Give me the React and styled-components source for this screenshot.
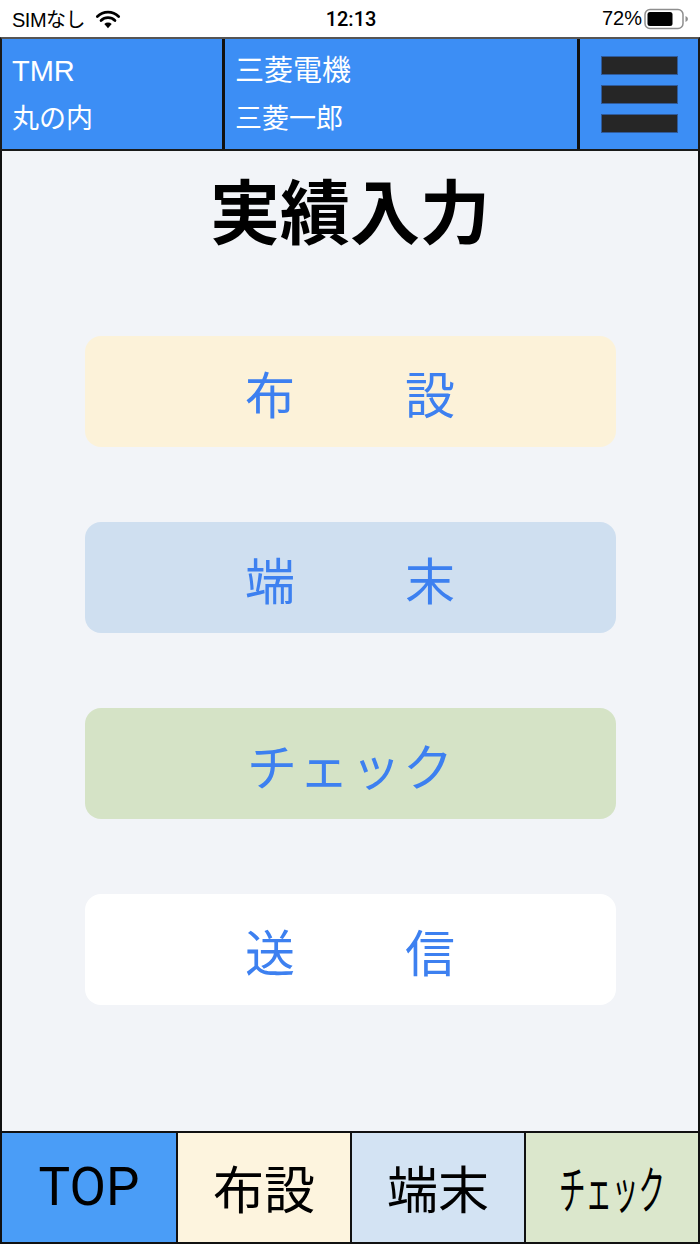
import styled, { createGlobalStyle } from 'styled-components'

const GlobalStyle = createGlobalStyle`
  html, body {
    margin: 0;
    padding: 0;
    background: #ffffff;
  }
  body {
    font-family: "Noto Sans CJK JP", "Noto Sans", sans-serif;
  }
  * {
    box-sizing: border-box;
  }
`

const ACTIONS = [
  { chars: ['布', '設'], gap: 110, bg: '#fcf2d9' },
  { chars: ['端', '末'], gap: 110, bg: '#cfdff0' },
  { chars: ['チ', 'ェ', 'ッ', 'ク'], gap: 2, bg: '#d5e3c6' },
  { chars: ['送', '信'], gap: 110, bg: '#ffffff' },
]

const TABS = [
  { label: 'TOP', bg: '#4a9df7', latin: true },
  { label: '布設', bg: '#fdf4de' },
  { label: '端末', bg: '#d3e3f3' },
  { label: 'チェック', bg: '#dbe7cc', condensed: true },
]

const WifiIcon = () => (
  <svg width="26" height="20" viewBox="0 0 24 18">
    <path d="M12 17.5 L8.6 13.6 A5 5 0 0 1 15.4 13.6 Z" fill="#000" />
    <path d="M5.6 10.4 A9.2 9.2 0 0 1 18.4 10.4" stroke="#000" strokeWidth="2.6" fill="none" strokeLinecap="round" />
    <path d="M2.2 6.6 A14 14 0 0 1 21.8 6.6" stroke="#000" strokeWidth="2.6" fill="none" strokeLinecap="round" />
  </svg>
)

const BatteryIcon = () => (
  <svg width="46" height="22" viewBox="0 0 46 22">
    <rect x="1" y="1.5" width="38" height="19" rx="5" fill="none" stroke="#8e8e8e" strokeWidth="1.5" />
    <rect x="3.5" y="4" width="25" height="14" rx="2.5" fill="#000" />
    <path d="M41.5 8 Q44 9 44 11 Q44 13 41.5 14 Z" fill="#8e8e8e" />
  </svg>
)

export default function App() {
  return (
    <>
      <GlobalStyle />
      <Screen>
        <StatusBar>
          <StatusLeft>
            SIMなし
            <WifiIcon />
          </StatusLeft>
          <Clock>12:13</Clock>
          <StatusRight>
            72%
            <BatteryIcon />
          </StatusRight>
        </StatusBar>

        <Header>
          <InfoCell width={220}>
            <InfoLine>TMR</InfoLine>
            <InfoLine>丸の内</InfoLine>
          </InfoCell>
          <InfoCell width={355} divider>
            <InfoLine>三菱電機</InfoLine>
            <InfoLine>三菱一郎</InfoLine>
          </InfoCell>
          <MenuCell>
            <MenuBar />
            <MenuBar />
            <MenuBar />
          </MenuCell>
        </Header>

        <Main>
          <Title>実績入力</Title>
          <ActionList>
            {ACTIONS.map((a, i) => (
              <ActionButton key={i} bg={a.bg}>
                <ActionLabel gap={a.gap}>
                  {a.chars.map((c, j) => (
                    <span key={j}>{c}</span>
                  ))}
                </ActionLabel>
              </ActionButton>
            ))}
          </ActionList>
        </Main>

        <TabBar>
          {TABS.map((t, i) => (
            <Tab key={i} bg={t.bg} first={i === 0}>
              <TabLabel latin={t.latin} condensed={t.condensed}>
                {t.label}
              </TabLabel>
            </Tab>
          ))}
        </TabBar>
      </Screen>
    </>
  )
}

const Screen = styled.div`
  width: 700px;
  height: 1244px;
  display: flex;
  flex-direction: column;
  overflow: hidden;
`

const StatusBar = styled.div`
  height: 37px;
  flex-shrink: 0;
  display: grid;
  grid-template-columns: 1fr auto 1fr;
  align-items: center;
  padding: 0 10px 0 12px;
  background: #ffffff;
  font-family: "Liberation Sans", "Noto Sans CJK JP", sans-serif;
  font-size: 20px;
  color: #000;
`

const StatusLeft = styled.div`
  display: flex;
  align-items: center;
  gap: 10px;
  letter-spacing: -0.5px;
`

const Clock = styled.div`
  font-family: Roboto, "Liberation Sans", sans-serif;
  font-weight: 500;
  font-size: 20px;
`

const StatusRight = styled.div`
  display: flex;
  align-items: center;
  justify-content: flex-end;
  gap: 2px;
`

const Header = styled.div`
  height: 114px;
  flex-shrink: 0;
  display: flex;
  background: #3c8ef5;
  border: 2px solid #1a1a1a;
  border-top-color: #555;
`

const InfoCell = styled.div`
  width: ${({ width }) => width}px;
  flex-shrink: 0;
  display: flex;
  flex-direction: column;
  justify-content: center;
  padding-left: 10px;
  border-left: ${({ divider }) => (divider ? '3px solid #111' : 'none')};
  color: #ffffff;
`

const InfoLine = styled.div`
  font-family: "Noto Sans CJK JP", "Noto Sans", sans-serif;
  font-size: 27px;
  line-height: 46px;
  &:first-child {
    font-family: "Liberation Sans", "Noto Sans CJK JP", sans-serif;
    font-size: 29px;
  }
`

const MenuCell = styled.div`
  flex: 1;
  display: flex;
  flex-direction: column;
  align-items: center;
  justify-content: center;
  gap: 10px;
  border-left: 3px solid #111;
`

const MenuBar = styled.div`
  width: 77px;
  height: 19px;
  background: #262626;
  border: 1px solid #2f5a9a;
`

const Main = styled.div`
  flex: 1;
  display: flex;
  flex-direction: column;
  align-items: center;
  background: #f2f4f8;
  border-left: 2px solid #111;
  border-right: 2px solid #111;
`

const Title = styled.h1`
  margin: 17px 0 0;
  font-family: "Noto Sans CJK JP", sans-serif;
  font-weight: 700;
  font-size: 70px;
  line-height: 82px;
  color: #000;
`

const ActionList = styled.div`
  margin-top: 86px;
  display: flex;
  flex-direction: column;
  gap: 75px;
`

const ActionButton = styled.div`
  width: 531px;
  height: 111px;
  border-radius: 16px;
  background: ${({ bg }) => bg};
  display: flex;
  align-items: center;
  justify-content: center;
`

const ActionLabel = styled.div`
  display: flex;
  gap: ${({ gap }) => gap}px;
  font-family: "Noto Sans CJK JP", sans-serif;
  font-size: 50px;
  line-height: 1;
  color: #3d80f0;
`

const TabBar = styled.div`
  height: 113px;
  flex-shrink: 0;
  display: grid;
  grid-template-columns: repeat(4, 1fr);
  border: 2px solid #111;
`

const Tab = styled.div`
  display: flex;
  align-items: center;
  justify-content: center;
  background: ${({ bg }) => bg};
  border-left: ${({ first }) => (first ? 'none' : '2px solid #111')};
  overflow: hidden;
`

const TabLabel = styled.span`
  display: inline-block;
  color: #000;
  font-family: ${({ latin }) =>
    latin ? 'Roboto, "Liberation Sans", sans-serif' : '"Noto Sans CJK JP", sans-serif'};
  font-size: ${({ latin }) => (latin ? 53 : 51)}px;
  line-height: 1;
  white-space: nowrap;
  transform: ${({ condensed }) => (condensed ? 'scaleX(0.52)' : 'none')};
`
